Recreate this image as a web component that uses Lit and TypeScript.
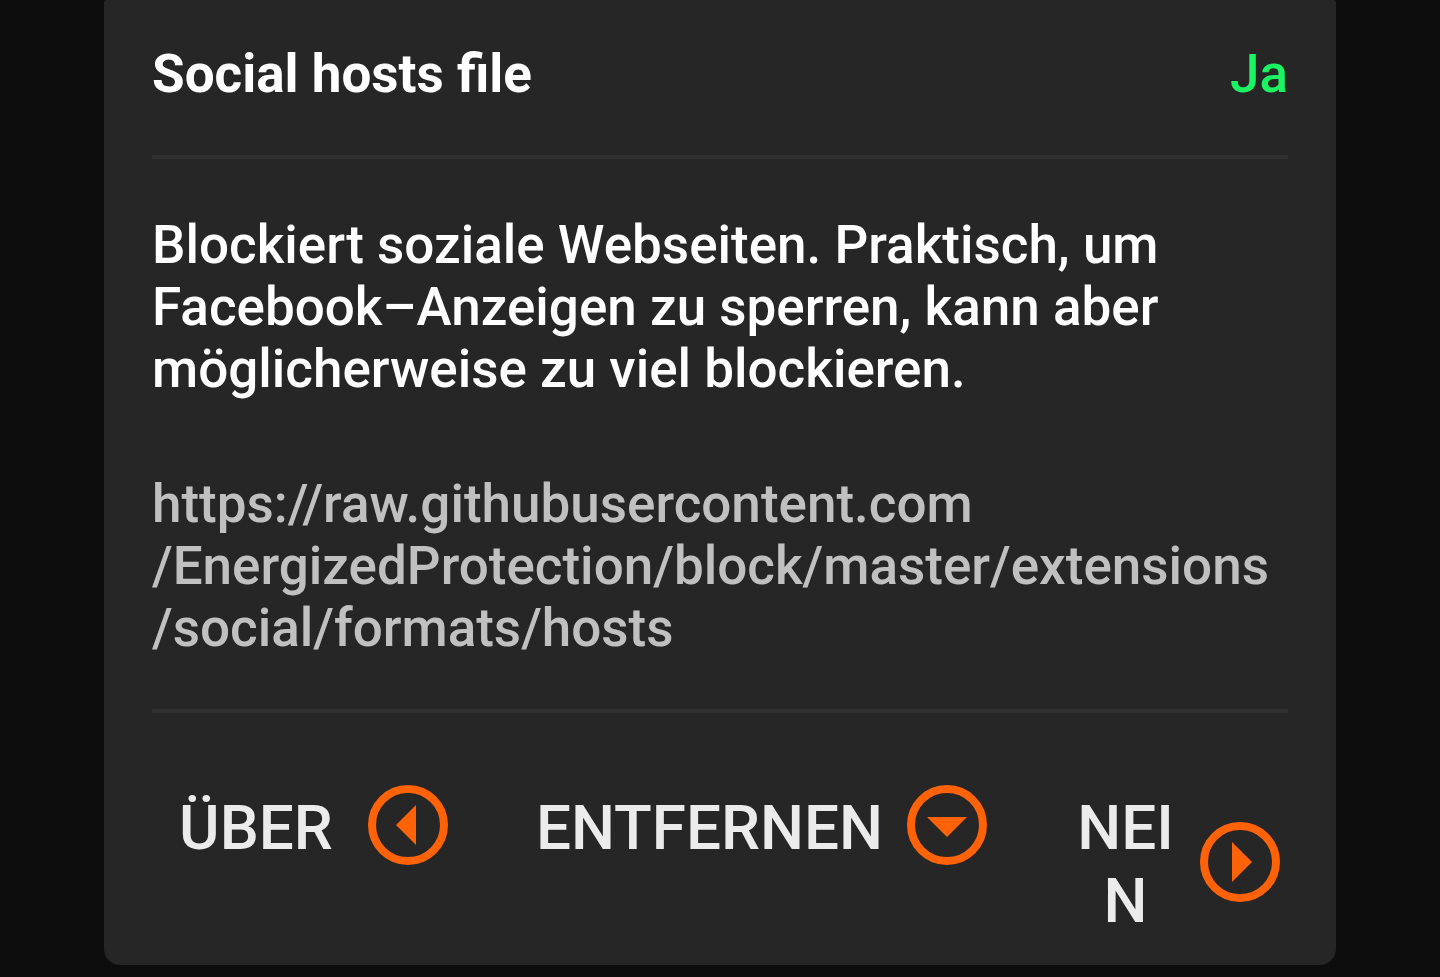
import { LitElement, html, css, svg } from "lit";
import { customElement, property } from "lit/decorators.js";

const arrows: Record<string, string> = {
  left: "M48 20V60L28 40Z",
  down: "M20 32H60L40 52Z",
  right: "M32 20V60L52 40Z",
};

@customElement("arrow-button")
class ArrowButton extends LitElement {
  @property() label = "";
  @property() direction = "left";

  static styles = css`
    :host { display: block; min-width: 0; }
    .action {
      display: flex;
      align-items: center;
      width: 100%;
      gap: 8px;
      padding: 0 8px 0 0;
      border: 0;
      background: none;
      color: #ebebeb;
      font: 500 62px/73px Roboto, sans-serif;
      text-align: center;
      cursor: pointer;
    }
    .label { flex: 1; min-width: 0; word-break: break-all; }
    .icon { flex: none; width: 80px; height: 80px; margin: -6px 0 -1px; }
  `;

  render() {
    return html`<button class="action" type="button">
      <span class="label">${this.label}</span>
      <svg class="icon" viewBox="0 0 80 80" aria-hidden="true">
        <circle cx="40" cy="40" r="36" fill="none" stroke="#ff6207" stroke-width="8" />
        ${svg`<path d=${arrows[this.direction]} fill="#ff6207" />`}
      </svg>
    </button>`;
  }
}

@customElement("app-root")
class AppRoot extends LitElement {
  static styles = css`
    :host {
      display: block;
      box-sizing: border-box;
      min-height: 100vh;
      padding: 0 104px 12px;
      background: #0d0d0d;
      color: #fff;
      font: 500 53px/62px Roboto, sans-serif;
    }
    .card {
      padding: 43px 48px 28px;
      border-radius: 2px 2px 16px 16px;
      background: #262626;
    }
    .header { display: flex; justify-content: space-between; padding-bottom: 50px; }
    .title { margin: 0; font: inherit; font-weight: 700; }
    .status { color: #1af462; }
    .details { padding: 55px 0 50px; border: solid #303030; border-width: 4px 0; }
    .text { margin: 0 0 73px; }
    .link { color: #c0c0c0; text-decoration: none; }
    .actions {
      display: grid;
      grid-template-columns: 304fr 475fr 229fr;
      gap: 64px;
      align-items: start;
      padding-top: 78px;
    }
  `;

  render() {
    return html`<main class="card">
      <header class="header">
        <h1 class="title">Social hosts file</h1>
        <span class="status">Ja</span>
      </header>
      <section class="details">
        <p class="text">Blockiert soziale Webseiten. Praktisch, um Facebook–Anzeigen zu sperren, kann aber möglicherweise zu viel blockieren.</p>
        <a class="link" href="https://raw.githubusercontent.com/EnergizedProtection/block/master/extensions/social/formats/hosts">https://raw.githubusercontent.com<wbr />/EnergizedProtection/block/master/extensions<wbr />/social/formats/hosts</a>
      </section>
      <nav class="actions">
        <arrow-button label="ÜBER" direction="left"></arrow-button>
        <arrow-button label="ENTFERNEN" direction="down"></arrow-button>
        <arrow-button label="NEIN" direction="right"></arrow-button>
      </nav>
    </main>`;
  }
}
